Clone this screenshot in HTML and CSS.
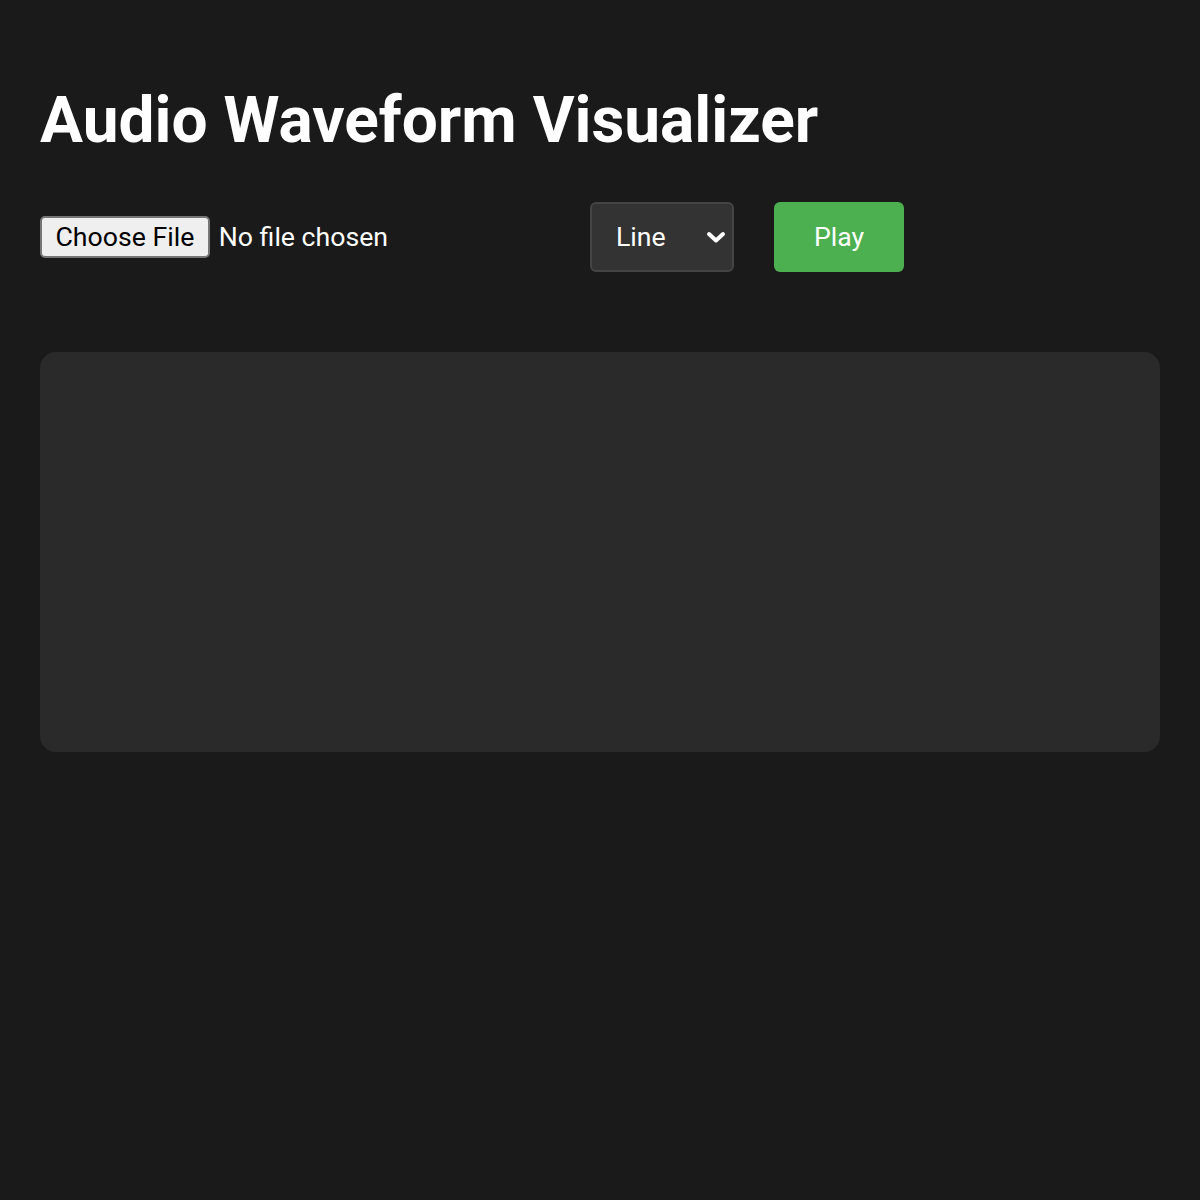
FILE: index.html
```html
<!DOCTYPE html>
<html lang="en">
<head>
    <meta charset="UTF-8">
    <meta name="viewport" content="width=device-width, initial-scale=1.0">
    <title>Audio Waveform Visualizer</title>
    <link rel="stylesheet" href="styles.css">
</head>
<body>
    <h1>Audio Waveform Visualizer</h1>
    <div class="controls">
        <input type="file" id="audioFile" accept="audio/*">
        <select id="style">
            <option value="line">Line</option>
            <option value="bars">Bars</option>
        </select>
        <button id="playBtn">Play</button>
    </div>
    <canvas id="waveform" width="1120" height="400"></canvas>
</body>
</html>
```

FILE: styles.css
```css
/* styles.css */
body {
    font-family: Roboto, Arial, sans-serif;
    background-color: #1a1a1a;
    color: #ffffff;
    margin: 0;
    padding: 40px;
}

h1 {
    font-size: 64px;
    font-weight: bold;
    margin: 43px 0 44px;
    line-height: 75px;
}

.controls {
    display: flex;
    align-items: center;
    gap: 40px;
    margin-bottom: 80px;
}

input[type="file"] {
    font-family: Roboto, Arial, sans-serif;
    font-size: 26.67px;
    color: #ffffff;
    width: 510px;
}

input[type="file"]::file-selector-button {
    font-family: Roboto, Arial, sans-serif;
    font-size: 26.67px;
    color: #000000;
    background-color: #efefef;
    border: 2px solid #767676;
    border-radius: 5px;
    padding: 2px 13.5px;
    margin-right: 9px;
    height: 42px;
}

select {
    appearance: none;
    font-family: Roboto, Arial, sans-serif;
    font-size: 26.67px;
    color: #ffffff;
    background-color: #333333;
    background-image: url("data:image/svg+xml,%3Csvg xmlns='http://www.w3.org/2000/svg' width='22' height='14' viewBox='0 0 22 14'%3E%3Cpath d='M4 4l7 6.5 7-6.5' fill='none' stroke='white' stroke-width='4' stroke-linecap='round' stroke-linejoin='round'/%3E%3C/svg%3E");
    background-repeat: no-repeat;
    background-position: right 5px center;
    border: 2px solid #444444;
    border-radius: 6px;
    padding: 0 16px 0 24px;
    height: 70px;
    width: 144px;
}

button {
    font-family: Roboto, Arial, sans-serif;
    font-size: 26.67px;
    color: #ffffff;
    background-color: #4caf50;
    border: none;
    border-radius: 6px;
    height: 70px;
    width: 130px;
    cursor: pointer;
}

button:hover {
    background-color: #45a049;
}

canvas {
    display: block;
    width: 1120px;
    height: 400px;
    background-color: #2a2a2a;
    border-radius: 16px;
}
```
